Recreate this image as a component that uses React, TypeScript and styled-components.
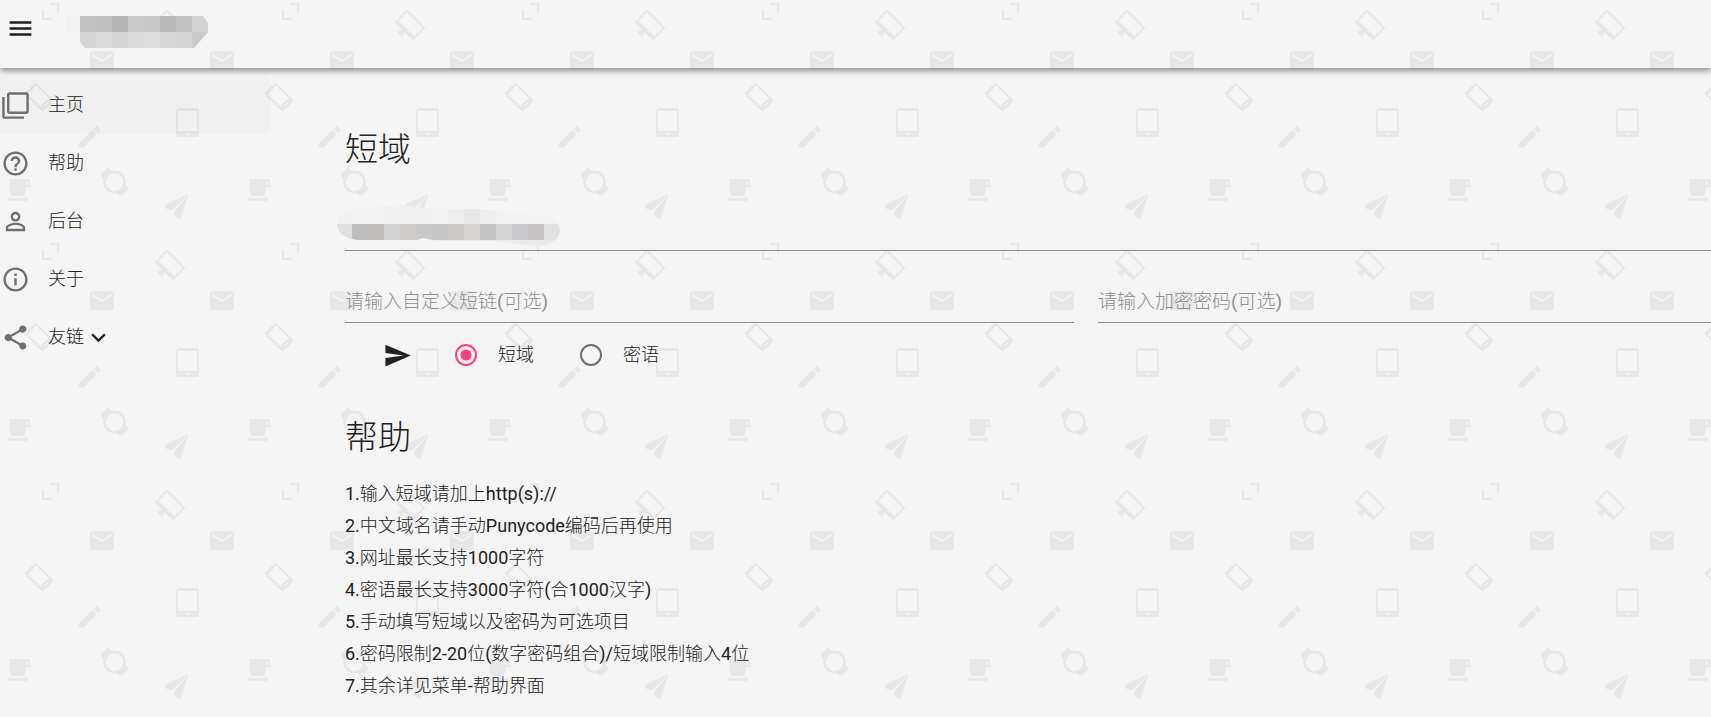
import React, { useState } from "react";
import styled, { createGlobalStyle } from "styled-components";

/* 240px wallpaper tile of small device glyphs */
const glyph = {
  mail: "M20 4H4c-1.100 0-2 .9-2 2v12c0 1.100.9 2 2 2h16c1.100 0 2-.9 2-2V6c0-1.100-.9-2-2-2zm0 4l-8 5-8-5V6l8 5 8-5v2z",
  cup: "M20 3H4v10c0 2.210 1.790 4 4 4h6c2.210 0 4-1.790 4-4v-3h2c1.110 0 2-.9 2-2V5c0-1.110-.89-2-2-2zm0 5h-2V5h2v3zM2 21h18v-2H2v2z",
  pencil: "M3 17.250V21h3.750L17.810 9.940l-3.750-3.750L3 17.250zM20.710 7.040c.39-.39.39-1.020 0-1.410l-2.340-2.340c-.39-.39-1.020-.39-1.410 0l-1.830 1.830 3.750 3.750 1.830-1.830z",
  tablet: "M0 2.500A2.500 2.500 0 0 1 2.500 0h18A2.500 2.500 0 0 1 23 2.500v24a2.500 2.500 0 0 1-2.500 2.500h-18A2.500 2.500 0 0 1 0 26.500zM2 3v20h19V3zM9 25v1.500h5V25z",
};

const tile = `<svg xmlns="http://www.w3.org/2000/svg" width="240" height="240"><g fill="#e7e7e7" fill-rule="evenodd">
<path d="M50 3h9v10h-2V5h-7zM42 10h2v8h8v2H42z"/>
<g transform="translate(170 25) rotate(45)"><path d="M-12-9H12a1 1 0 0 1 1 1V8a1 1 0 0 1-1 1H-12a1 1 0 0 1-1-1V-8a1 1 0 0 1 1-1zM-11-7V5H11V-7z"/><path d="M-3 9h4v3h2v2H-5v-2h2z"/></g>
<g transform="translate(87.600 46.500) scale(1.200)"><path d="${glyph.mail}"/></g>
<g transform="translate(207.600 46.500) scale(1.200)"><path d="${glyph.mail}"/></g>
<path transform="translate(39 97) rotate(-45)" d="M-8-10.500a2.500 2.500 0 0 1 2.500-2.500h11a2.500 2.500 0 0 1 2.500 2.500v21a2.500 2.500 0 0 1-2.500 2.500h-11a2.500 2.500 0 0 1-2.500-2.500zM-6-10V7.500H6V-10zM-2 9.500v1.500h4V9.500z"/>
<path transform="translate(176 108)" d="${glyph.tablet}"/>
<path transform="translate(75.500 122.500) scale(1.200)" d="${glyph.pencil}"/>
<g transform="translate(114.500 182) rotate(-45)"><path d="M-5-15H5L6-9.500A11 11 0 0 1 6 9.500L5 15H-5L-6 9.500A11 11 0 0 1-6-9.500zM0-8.500A8.500 8.500 0 1 0 .1-8.500z"/></g>
<path transform="translate(5 175.500) scale(1.150 1.200)" d="${glyph.cup}"/>
<path d="M189 194l-24 10v4l6 3zM189 194l-15 18v3l6 4z"/>
</g></svg>`;

const Global = createGlobalStyle`
  * { box-sizing: border-box; }
  html { min-height: 100%; background: #f4f4f4 url("data:image/svg+xml,${encodeURIComponent(tile)}"); }
  body {
    margin: 0;
    color: #212121;
    font: 400 18px/32px Roboto, "Noto Sans CJK SC Light", "Noto Sans CJK SC", sans-serif;
    overflow-x: hidden;
  }
`;

const Header = styled.header`
  display: flex;
  align-items: flex-start;
  gap: 28px;
  height: 68px;
  padding: 14px 6px;
  box-shadow: 0 3px 6px rgba(0, 0, 0, 0.4);
`;

const IconButton = styled.button`
  display: flex;
  padding: 0;
  border: 0;
  background: none;
  color: inherit;
  cursor: pointer;
`;

const Icon = styled.svg`
  flex: none;
  width: 29px;
  height: 29px;
  fill: currentColor;
`;

const Body = styled.div`
  display: flex;
`;

const Drawer = styled.nav`
  flex: none;
  width: 271px;
  padding-top: 8px;
`;

const NavItem = styled.a<{ $active?: boolean }>`
  display: flex;
  align-items: center;
  height: 58px;
  padding-left: 1px;
  border-radius: 0 5px 5px 0;
  background: ${(p) => (p.$active ? "rgba(0, 0, 0, 0.016)" : "none")};
  color: inherit;
  text-decoration: none;

  > svg:first-child {
    margin-right: 18px;
    color: #6f6f6f;
  }
`;

const Main = styled.main`
  flex: 1;
  min-width: 0;
  padding: 58px 0 15px 74px;
  overflow-x: clip;
`;

const Title = styled.h1`
  margin: 0;
  font-size: 33px;
  font-weight: 400;
  line-height: 48px;
`;

const Form = styled.form`
  margin: 33px -116px 27px 0;
`;

const Row = styled.div`
  display: grid;
  grid-template-columns: 1fr 1fr;
  gap: 24px;
  margin-top: 28px;
`;

const Field = styled.div`
  position: relative;
`;

const Input = styled.input`
  display: block;
  width: 100%;
  height: 44px;
  padding: 2px 0 0;
  border: 0;
  border-bottom: 1px solid #8b8b8b;
  outline: 0;
  background: none;
  color: inherit;
  font: inherit;
  font-size: 19px;

  &::placeholder {
    color: #8f8f8f;
    opacity: 1;
  }
`;

const Mask = styled.svg`
  position: absolute;
  left: -8px;
  top: -3px;
`;

const Actions = styled.div`
  display: flex;
  align-items: center;
  height: 64px;
  padding-left: 38px;
`;

const Choices = styled.div`
  display: flex;
  gap: 46px;
  margin-left: 43px;
`;

const Choice = styled.label`
  display: flex;
  align-items: center;
  gap: 21px;
  cursor: pointer;
`;

const Radio = styled.input`
  appearance: none;
  width: 22px;
  height: 22px;
  margin: 0;
  border: 2px solid #6f6f6f;
  border-radius: 50%;

  &:checked {
    border-color: #ff4081;
    background: radial-gradient(circle, #ff4081 5px, transparent 6px);
  }
`;

const Steps = styled.ul`
  margin: 16px 0 0;
  padding: 0;
  list-style: none;
`;

const paths = {
  menu: "M3 18h18v-2H3v2zm0-5h18v-2H3v2zm0-7v2h18V6H3z",
  home: "M3 5H1v16c0 1.100.9 2 2 2h16v-2H3V5zm18-4H7c-1.100 0-2 .9-2 2v14c0 1.100.9 2 2 2h14c1.100 0 2-.9 2-2V3c0-1.100-.9-2-2-2zm0 16H7V3h14v14z",
  help: "M11 18h2v-2h-2v2zm1-16C6.480 2 2 6.480 2 12s4.480 10 10 10 10-4.480 10-10S17.520 2 12 2zm0 18c-4.410 0-8-3.590-8-8s3.590-8 8-8 8 3.590 8 8-3.590 8-8 8zm0-14c-2.210 0-4 1.790-4 4h2c0-1.100.9-2 2-2s2 .9 2 2c0 2-3 1.750-3 5h2c0-2.250 3-2.500 3-5 0-2.210-1.790-4-4-4z",
  person: "M12 5.900c1.160 0 2.100.94 2.100 2.100s-.94 2.100-2.100 2.100S9.900 9.160 9.900 8s.94-2.100 2.100-2.100m0 9c2.970 0 6.100 1.460 6.100 2.100v1.100H5.900V17c0-.64 3.130-2.100 6.100-2.100M12 4C9.790 4 8 5.790 8 8s1.790 4 4 4 4-1.790 4-4-1.790-4-4-4zm0 9c-2.670 0-8 1.340-8 4v3h16v-3c0-2.660-5.330-4-8-4z",
  info: "M11 17h2v-6h-2v6zm1-15C6.480 2 2 6.480 2 12s4.480 10 10 10 10-4.480 10-10S17.520 2 12 2zm0 18c-4.410 0-8-3.590-8-8s3.590-8 8-8 8 3.590 8 8-3.590 8-8 8zM11 9h2V7h-2v2z",
  share: "M18 16.080c-.76 0-1.440.3-1.960.77L8.910 12.700c.05-.23.09-.46.09-.7s-.04-.47-.09-.7l7.050-4.110c.54.5 1.250.81 2.040.81 1.660 0 3-1.340 3-3s-1.340-3-3-3-3 1.340-3 3c0 .24.04.47.09.7L8.040 9.810C7.500 9.310 6.790 9 6 9c-1.660 0-3 1.340-3 3s1.340 3 3 3c.79 0 1.500-.31 2.040-.81l7.120 4.160c-.05.21-.08.43-.08.65 0 1.610 1.310 2.920 2.920 2.920s2.920-1.310 2.920-2.920-1.310-2.920-2.920-2.920z",
  more: "M16.590 8.590L12 13.170 7.410 8.590 6 10l6 6 6-6z",
  send: "M2.010 21L23 12 2.010 3 2 10l15 2-15 2z",
};

const Glyph = ({ name }: { name: keyof typeof paths }) => (
  <Icon viewBox="0 0 24 24" aria-hidden="true">
    <path d={paths[name]} />
  </Icon>
);

const nav: { icon: keyof typeof paths; text: string }[] = [
  { icon: "home", text: "主页" },
  { icon: "help", text: "帮助" },
  { icon: "person", text: "后台" },
  { icon: "info", text: "关于" },
  { icon: "share", text: "友链" },
];

const steps = [
  "1.输入短域请加上http(s)://",
  "2.中文域名请手动Punycode编码后再使用",
  "3.网址最长支持1000字符",
  "4.密语最长支持3000字符(合1000汉字)",
  "5.手动填写短域以及密码为可选项目",
  "6.密码限制2-20位(数字密码组合)/短域限制输入4位",
  "7.其余详见菜单-帮助界面",
];

/* Rows of 16px squares, clipped to a blob outline */
function Mosaic({ rows, x = 0, y = 0 }: { rows: string[][]; x?: number; y?: number }) {
  return (
    <>
      {rows.map((row, r) =>
        row.map((c, i) => (
          <rect key={`${r}-${i}`} x={x + i * 16} y={y + r * 16} width="16" height="16" fill={c} shapeRendering="crispEdges" />
        )),
      )}
    </>
  );
}

const logoRows = [
  ["#f1f1f1", "#c0c0c0", "#bfbfbf", "#b5b5b5", "#c9c9c9", "#c7c7c7", "#bababa", "#c0c0c0", "#d3d3d3"],
  ["#f4f4f4", "#d5d5d5", "#dadada", "#d5d5d5", "#dadada", "#dddddd", "#d8d8d8", "#d6d6d6", "#cacaca"],
];

const urlRows = [
  ["#f0f0f0", "#f1f1f1", "#f1f1f1", "#f0f0f0", "#efefef", "#efefef", "#f2f2f2", "#eeeeee", "#e7e7e7", "#eeeeee", "#f1f1f1", "#f1f1f1", "#f1f1f1", "#f1f1f1"],
  ["#e1e0df", "#bdbdbd", "#bfbebc", "#d3d3d3", "#cdccca", "#c7c7c7", "#c6c6c6", "#cbcac8", "#d6d4d1", "#c4c4c5", "#d4d4d4", "#cacacd", "#c5c3c4", "#e1e1e1"],
  Array(14).fill("#ebebeb"),
];

export default function App() {
  const [mode, setMode] = useState("domain");
  return (
    <>
      <Global />
      <Header>
        <IconButton type="button" aria-label="菜单">
          <Glyph name="menu" />
        </IconButton>
        <svg width="146" height="36" aria-hidden="true">
          <clipPath id="logo">
            <path d="M2 2H140L145 9V18L131 34H22L17 28V18H4z" />
          </clipPath>
          <g clipPath="url(#logo)">
            <Mosaic rows={logoRows} x={1} y={2} />
          </g>
        </svg>
      </Header>
      <Body>
        <Drawer>
          {nav.map((n, i) => (
            <NavItem key={n.text} href="#" $active={i === 0}>
              <Glyph name={n.icon} />
              {n.text}
              {n.icon === "share" && <Glyph name="more" />}
            </NavItem>
          ))}
        </Drawer>
        <Main>
          <Title>短域</Title>
          <Form onSubmit={(e) => e.preventDefault()}>
            <Field>
              <Input type="url" aria-label="网址" />
              <Mask width="224" height="44" aria-hidden="true">
                <clipPath id="url">
                  <path d="M0 22C0 12 8 5 20 4L64 1L96 5H142L175 9L212 13Q223 16 223 27Q221 40 205 42L180 40L160 37H100L86 34L80 36H20Q3 34 0 22z" />
                </clipPath>
                <g clipPath="url(#url)">
                  <Mosaic rows={[urlRows[0], ...urlRows]} x={-1} y={-12} />
                </g>
              </Mask>
            </Field>
            <Row>
              <Input aria-label="自定义短链" placeholder="请输入自定义短链(可选)" />
              <Input aria-label="加密密码" placeholder="请输入加密密码(可选)" />
            </Row>
            <Actions>
              <IconButton type="submit" aria-label="提交">
                <Glyph name="send" />
              </IconButton>
              <Choices>
                <Choice>
                  <Radio type="radio" name="mode" checked={mode === "domain"} onChange={() => setMode("domain")} />
                  短域
                </Choice>
                <Choice>
                  <Radio type="radio" name="mode" checked={mode === "secret"} onChange={() => setMode("secret")} />
                  密语
                </Choice>
              </Choices>
            </Actions>
          </Form>
          <Title as="h2">帮助</Title>
          <Steps>
            {steps.map((s) => (
              <li key={s}>{s}</li>
            ))}
          </Steps>
        </Main>
      </Body>
    </>
  );
}
